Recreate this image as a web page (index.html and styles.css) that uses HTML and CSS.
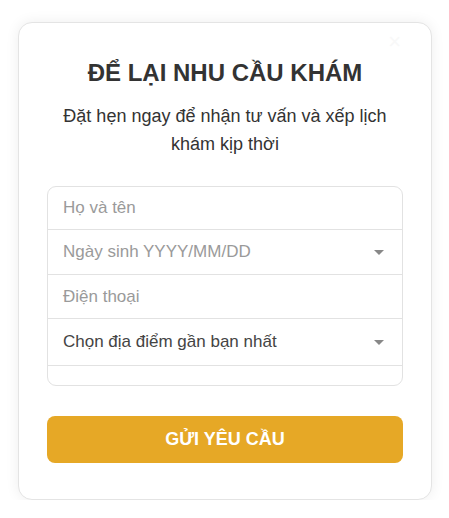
FILE: index.html
```html
<!DOCTYPE html>
<html lang="vi">
<head>
<meta charset="utf-8">
<link rel="stylesheet" href="styles.css">
</head>
<body>
<div class="card">
  <span class="close">×</span>
  <h2 class="title">ĐỂ LẠI NHU CẦU KHÁM</h2>
  <p class="sub">Đặt hẹn ngay để nhận tư vấn và xếp lịch khám kịp thời</p>
  <div class="fields">
    <div class="row r1"><span class="ph">Họ và tên</span></div>
    <div class="row r2"><span class="ph">Ngày sinh YYYY/MM/DD</span><span class="caret"></span></div>
    <div class="row r3"><span class="ph">Điện thoại</span></div>
    <div class="row r4"><span class="val">Chọn địa điểm gần bạn nhất</span><span class="caret"></span></div>
    <div class="row r5"></div>
  </div>
  <div class="btn">GỬI YÊU CẦU</div>
</div>
</body>
</html>
```
FILE: styles.css
```css
* { box-sizing: border-box; }
html, body { margin: 0; padding: 0; background: #fff; }
body { font-family: "Liberation Sans", Arial, sans-serif; }
.card {
  position: relative;
  width: 414px;
  margin: 22px 0 0 18px;
  border: 1px solid #e4e4e4;
  border-radius: 14px;
  background: #fff;
  box-shadow: 0 0 14px rgba(0,0,0,0.07);
  padding: 35px 28px 36px 28px;
}
.close {
  position: absolute;
  right: 30px;
  top: 6px;
  font-size: 22px;
  color: #f8f8f8;
}
.title {
  margin: 0;
  text-align: center;
  font-size: 24px;
  line-height: 30px;
  font-weight: 700;
  color: #333;
}
.sub {
  margin: 14px 0 0;
  text-align: center;
  font-size: 18px;
  line-height: 28px;
  color: #333;
  padding: 0 4px;
}
.fields {
  margin-top: 28px;
  border: 1px solid #e2e2e2;
  border-radius: 9px;
  overflow: hidden;
  height: 200px;
}
.row {
  display: flex;
  align-items: center;
  justify-content: space-between;
  padding: 0 18px 0 15px;
  border-bottom: 1px solid #e2e2e2;
  font-size: 17px;
}
.r1 { height: 43px; }
.r2 { height: 45px; }
.r3 { height: 44px; }
.r4 { height: 47px; }
.r5 { height: 20px; border-bottom: 0; }
.ph { color: #9a9a9a; }
.val { color: #444; }
.caret {
  width: 0; height: 0;
  border-left: 5px solid transparent;
  border-right: 5px solid transparent;
  border-top: 5px solid #888;
}
.btn {
  margin-top: 30px;
  height: 47px;
  border-radius: 8px;
  background: #e6a826;
  color: #fff;
  font-weight: 700;
  font-size: 18px;
  display: flex;
  align-items: center;
  justify-content: center;
}
```
